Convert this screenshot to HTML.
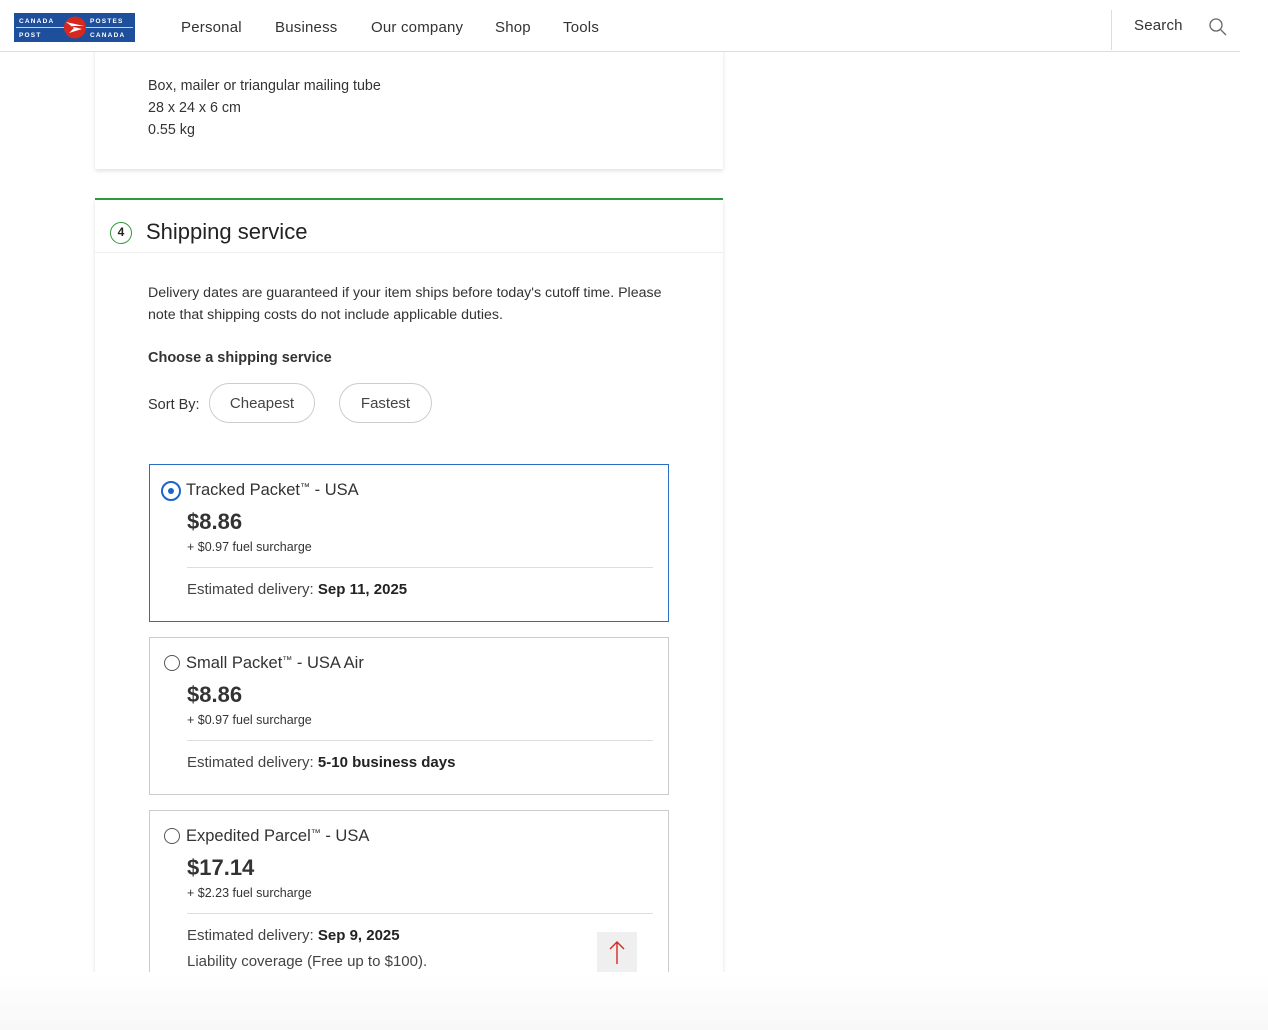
<!DOCTYPE html>
<html><head><meta charset="utf-8"><style>
*{margin:0;padding:0;box-sizing:border-box}
body{width:1268px;height:1030px;background:#fff;font-family:"Liberation Sans",Arial,sans-serif;color:#333;position:relative;overflow:hidden}
.a{position:absolute;white-space:nowrap}
.hdr{position:absolute;left:0;top:0;width:1240px;height:52px;border-bottom:1px solid #ddd;background:#fff;z-index:5}
.nav{font-size:15px;color:#333;top:19px;letter-spacing:.2px}
.card{position:absolute;left:95px;width:628px;background:#fff;box-shadow:0 2px 4px rgba(0,0,0,.12)}
.opt{position:absolute;left:149px;width:520px;height:158px;border:1px solid #ccc}
.opt .t{left:36px;top:16px;font-size:16.5px}
.opt .t sup{font-size:10px;vertical-align:5px}
.opt .p{left:37px;top:44px;font-size:22px;font-weight:bold}
.opt .s{left:37px;top:75px;font-size:12.5px}
.opt .hr{position:absolute;left:37px;right:15px;top:102px;border-top:1px solid #ddd}
.opt .e{left:37px;top:116px;font-size:15px;color:#444}
.rad{position:absolute;left:14px;top:17px;width:16px;height:16px;border:1.5px solid #555;border-radius:50%}
.pill{position:absolute;top:383px;height:40px;border:1px solid #ccc;border-radius:20px;font-size:15px;line-height:40px;text-align:center;color:#444}
</style></head><body>
<div class="hdr">
 <svg class="a" style="left:14px;top:13px" width="121" height="29" viewBox="0 0 121 29">
  <rect width="121" height="29" fill="#1e4f9c"/>
  <line x1="2" y1="14.5" x2="119" y2="14.5" stroke="#fff" stroke-width=".8"/>
  <circle cx="61" cy="14.5" r="11" fill="#d6281e"/>
  <path d="M52 9 L70 13 L56 13 L68 16 L55 20 L60 15 Z" fill="#fff"/>
  <text x="5" y="10" font-size="6.5" fill="#fff" font-weight="bold" letter-spacing="1.2" font-family="Liberation Sans">CANADA</text>
  <text x="5" y="24" font-size="6.5" fill="#fff" font-weight="bold" letter-spacing="1.2" font-family="Liberation Sans">POST</text>
  <text x="76" y="10" font-size="6.5" fill="#fff" font-weight="bold" letter-spacing="1.2" font-family="Liberation Sans">POSTES</text>
  <text x="76" y="24" font-size="6.5" fill="#fff" font-weight="bold" letter-spacing="1.2" font-family="Liberation Sans">CANADA</text>
 </svg>
 <div class="a nav" style="left:181px">Personal</div>
 <div class="a nav" style="left:275px">Business</div>
 <div class="a nav" style="left:371px">Our company</div>
 <div class="a nav" style="left:495px">Shop</div>
 <div class="a nav" style="left:563px">Tools</div>
 <div class="a" style="left:1111px;top:10px;width:1px;height:40px;background:#ddd"></div>
 <div class="a nav" style="left:1134px;top:17px">Search</div>
 <svg class="a" style="left:1208px;top:17px" width="20" height="20" viewBox="0 0 20 20"><circle cx="8" cy="8" r="6" fill="none" stroke="#666" stroke-width="1.3"/><line x1="12.3" y1="12.3" x2="18" y2="18" stroke="#666" stroke-width="1.3"/></svg>
</div>
<div class="card" style="top:30px;height:139px">
 <div class="a" style="left:53px;top:45px;font-size:14.3px;line-height:22px">Box, mailer or triangular mailing tube<br>28 x 24 x 6 cm<br>0.55 kg</div>
</div>
<div class="card" style="top:198px;height:800px;border-top:2px solid #2e9a3a">
 <div class="a" style="left:0;right:0;top:52px;border-top:1px solid #eee"></div>
 <div class="a" style="left:15px;top:22px;width:22px;height:22px;border:1.5px solid #2e9a3a;border-radius:50%;font-size:12px;font-weight:bold;text-align:center;line-height:19px;color:#222">4</div>
 <div class="a" style="left:51px;top:19px;font-size:22px;color:#222">Shipping service</div>
 <div class="a" style="left:53px;top:82px;font-size:14.2px;line-height:22px">Delivery dates are guaranteed if your item ships before today's cutoff time. Please<br>note that shipping costs do not include applicable duties.</div>
 <div class="a" style="left:53px;top:150px;font-size:14.5px;font-weight:bold">Choose a shipping service</div>
 <div class="a" style="left:53px;top:197px;font-size:14.5px">Sort By:</div>
</div>
<div class="pill" style="left:209px;width:106px">Cheapest</div>
<div class="pill" style="left:339px;width:93px">Fastest</div>
<div class="opt" style="top:464px;border-color:#2a6ec4">
 <div class="rad" style="left:11px;top:16px;width:20px;height:20px;border:2.5px solid #1c64c8"><div style="position:absolute;left:4.5px;top:4.5px;width:6px;height:6px;border-radius:50%;background:#1c64c8"></div></div>
 <div class="a t">Tracked Packet<sup>™</sup> - USA</div><div class="a p">$8.86</div><div class="a s">+ $0.97 fuel surcharge</div><div class="hr"></div>
 <div class="a e">Estimated delivery: <b style="color:#222">Sep 11, 2025</b></div>
</div>
<div class="opt" style="top:637px">
 <div class="rad"></div>
 <div class="a t">Small Packet<sup>™</sup> - USA Air</div><div class="a p">$8.86</div><div class="a s">+ $0.97 fuel surcharge</div><div class="hr"></div>
 <div class="a e">Estimated delivery: <b style="color:#222">5-10 business days</b></div>
</div>
<div class="opt" style="top:810px;height:200px">
 <div class="rad"></div>
 <div class="a t">Expedited Parcel<sup>™</sup> - USA</div><div class="a p">$17.14</div><div class="a s">+ $2.23 fuel surcharge</div><div class="hr"></div>
 <div class="a e">Estimated delivery: <b style="color:#222">Sep 9, 2025</b></div>
 <div class="a e" style="top:142px">Liability coverage (Free up to $100).</div>
</div>
<div class="a" style="left:597px;top:932px;width:40px;height:40px;background:#efefef">
 <svg width="40" height="40" viewBox="0 0 40 40"><path d="M20 32V10M13 17l7-7 7 7" fill="none" stroke="#d6281e" stroke-width="1.4"/></svg>
</div>
<div class="a" style="left:0;top:972px;width:1268px;height:58px;background:linear-gradient(#fff,#f8f8f8)"></div>
</body></html>
